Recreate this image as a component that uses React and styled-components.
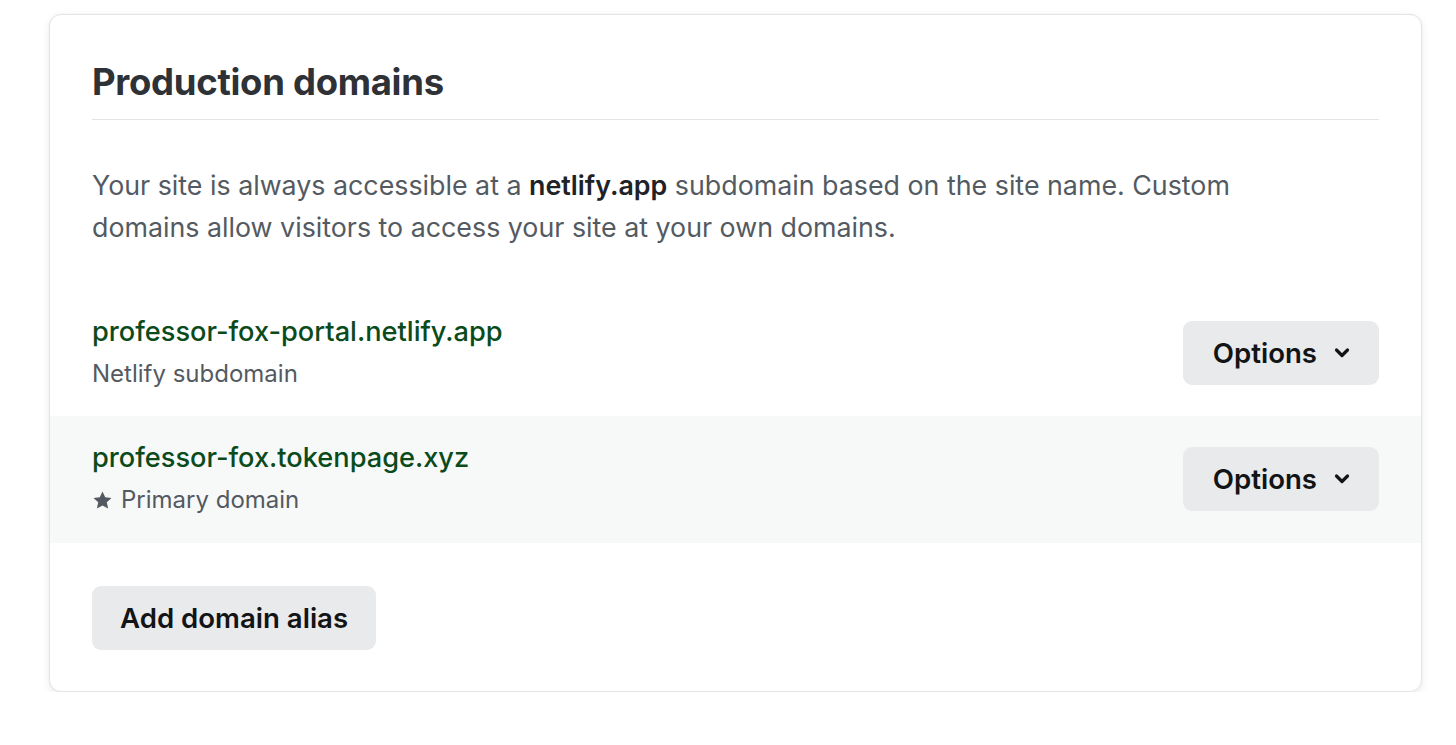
import React from "react";
import styled, { createGlobalStyle } from "styled-components";

const Global = createGlobalStyle`
  html, body { margin: 0; padding: 0; background: #ffffff; }
  body { font-family: Inter, "Noto Sans", "Liberation Sans", sans-serif; -webkit-font-smoothing: antialiased; }
  * { box-sizing: border-box; }
`;

const Page = styled.div`
  padding: 14px 0 0 49px;
`;

const Card = styled.section`
  width: 1373px;
  background: #fff;
  border: 1px solid #e2e4e6;
  border-radius: 12px;
  box-shadow: 0 3px 8px rgba(0, 0, 0, 0.08), 0 0 0 1px rgba(0, 0, 0, 0.01);
  padding: 0 0 41px;
`;

const Header = styled.header`
  margin: 0 42px;
  padding: 45px 0 15px;
  border-bottom: 1px solid #e1e3e5;
`;

const Title = styled.h2`
  margin: 0;
  font-size: 36.5px;
  line-height: 44px;
  font-weight: 700;
  color: #2e3136;
  letter-spacing: -0.3px;
`;

const Description = styled.p`
  margin: 44px 42px 42px;
  max-width: 1180px;
  font-size: 26.8px;
  line-height: 42px;
  color: #545a61;
  strong { color: #1f2226; font-weight: 600; }
`;

const Row = styled.div`
  display: flex;
  align-items: center;
  justify-content: space-between;
  padding: ${(p) => (p.$alt ? "21px 42px 22px" : "21px 42px")};
  background: ${(p) => (p.$alt ? "#f7f9f9" : "transparent")};
`;

const DomainInfo = styled.div`
  display: flex;
  flex-direction: column;
`;

const DomainLink = styled.a`
  font-size: 27.2px;
  line-height: 42px;
  font-weight: 500;
  color: #0b4b1b;
  text-decoration: none;
`;

const Sub = styled.span`
  display: flex;
  align-items: center;
  gap: 8px;
  font-size: 24px;
  line-height: 42px;
  color: #545a61;
`;

const Button = styled.button`
  display: inline-flex;
  align-items: center;
  gap: 17px;
  height: 64px;
  padding: ${(p) => (p.$menu ? "0 29px 0 30px" : "0 28px")};
  border: none;
  border-radius: 9px;
  background: #e9eaec;
  color: #131416;
  font-family: inherit;
  font-size: 27.6px;
  font-weight: 600;
  cursor: pointer;
`;

const Footer = styled.div`
  margin: 43px 42px 0;
`;

const Chevron = () => (
  <svg width="16" height="14" viewBox="0 0 16 14" aria-hidden="true">
    <path d="M2.5 4 L8 9.5 L13.5 4" fill="none" stroke="#131416" strokeWidth="3.2" strokeLinecap="round" strokeLinejoin="round" />
  </svg>
);

const Star = () => (
  <svg width="21" height="21" viewBox="0 0 24 24" aria-hidden="true">
    <path d="M12 1.8l3.1 6.6 7.2.8-5.4 4.9 1.5 7.1L12 17.6l-6.4 3.6 1.5-7.1-5.4-4.9 7.2-.8z" fill="#545a61" />
  </svg>
);

const domains = [
  { name: "professor-fox-portal.netlify.app", sub: "Netlify subdomain" },
  { name: "professor-fox.tokenpage.xyz", sub: "Primary domain", primary: true },
];

export default function App() {
  return (
    <>
      <Global />
      <Page>
        <Card>
          <Header>
            <Title>Production domains</Title>
          </Header>
          <Description>
            Your site is always accessible at a <strong>netlify.app</strong> subdomain based on the site name. Custom
            domains allow visitors to access your site at your own domains.
          </Description>
          {domains.map((d) => (
            <Row key={d.name} $alt={d.primary}>
              <DomainInfo>
                <DomainLink href="#">{d.name}</DomainLink>
                <Sub>
                  {d.primary && <Star />}
                  {d.sub}
                </Sub>
              </DomainInfo>
              <Button $menu>
                Options
                <Chevron />
              </Button>
            </Row>
          ))}
          <Footer>
            <Button>Add domain alias</Button>
          </Footer>
        </Card>
      </Page>
    </>
  );
}
